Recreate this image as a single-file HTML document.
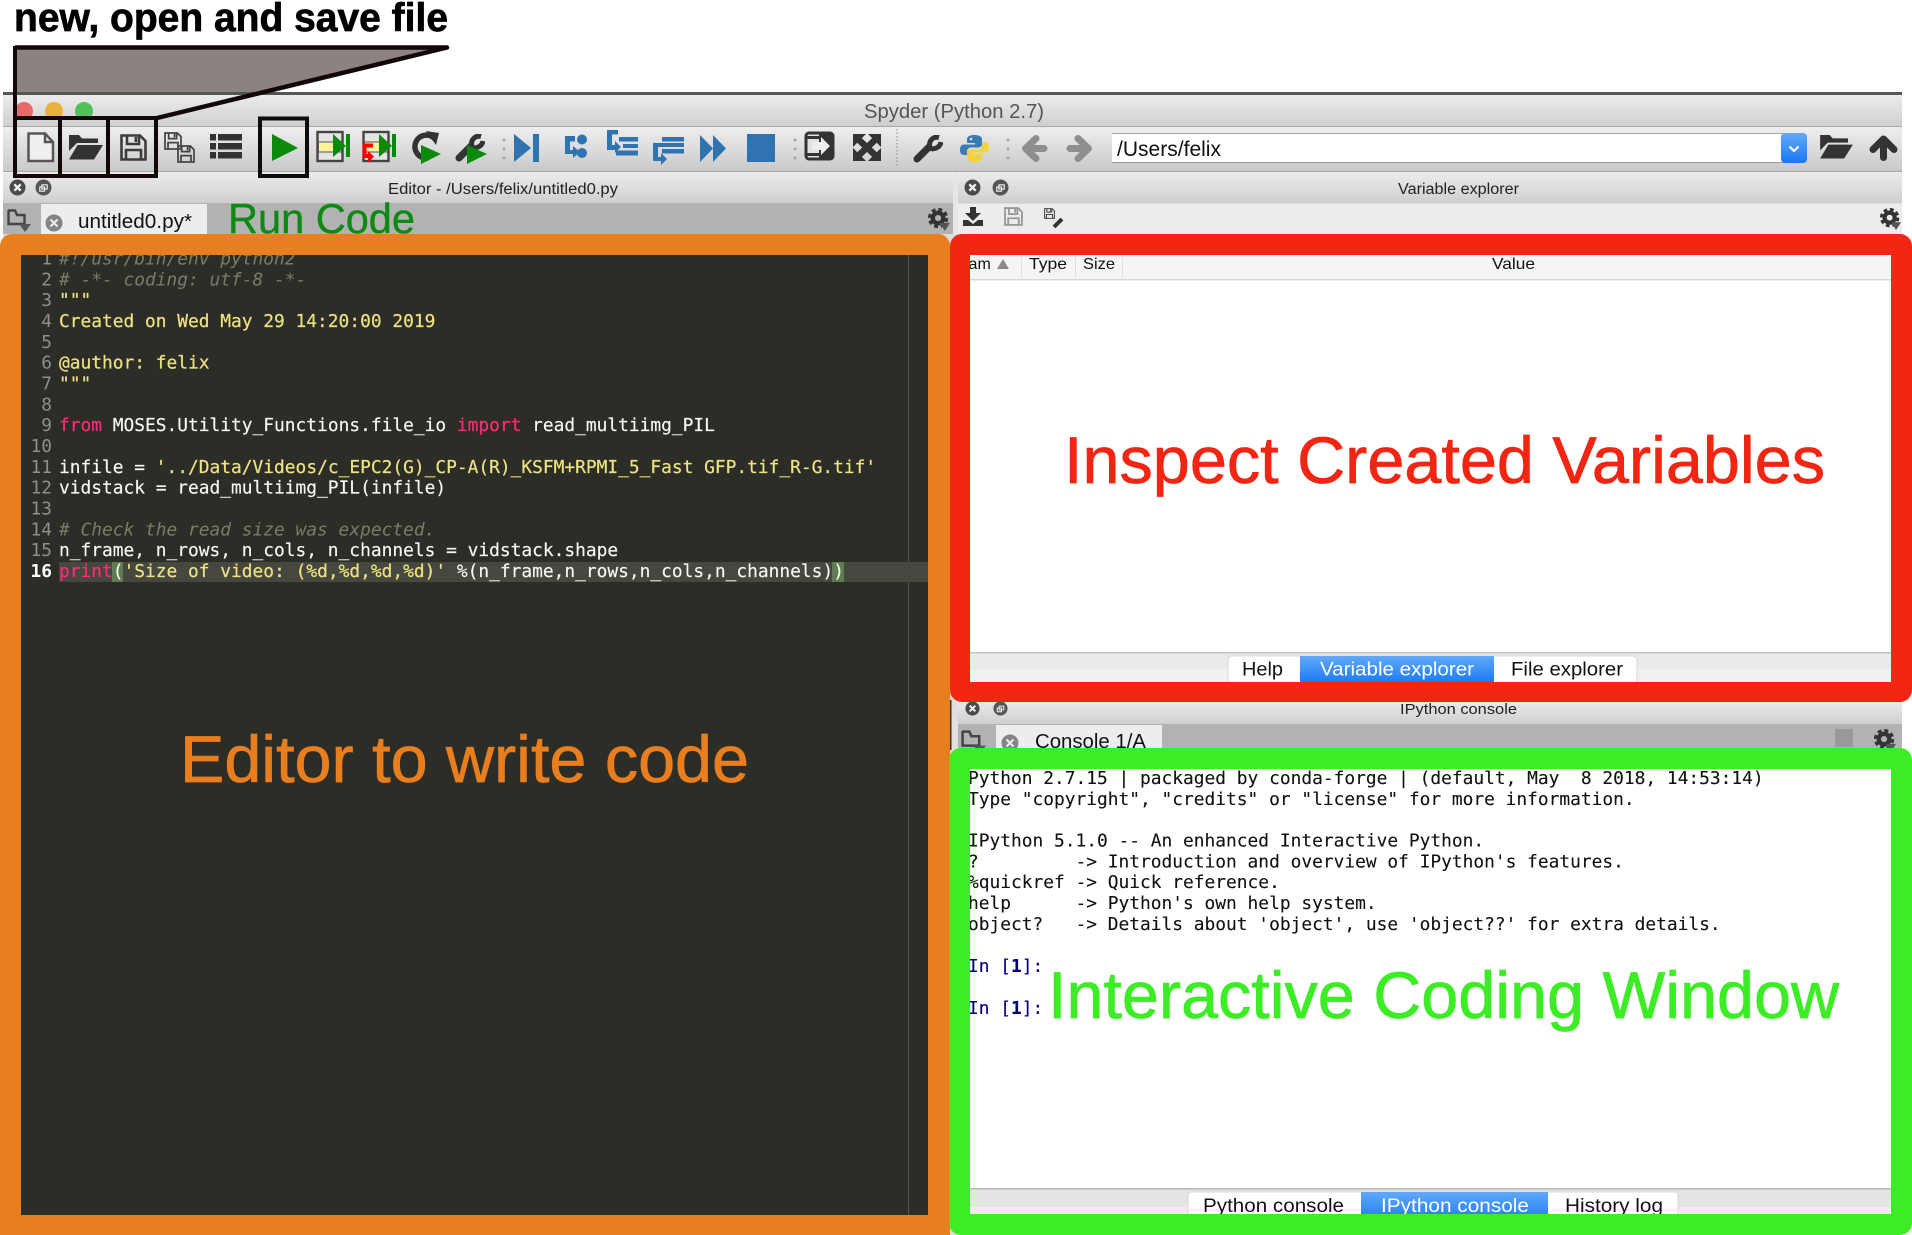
<!DOCTYPE html>
<html lang="en"><head><meta charset="utf-8"><title>Spyder</title>
<style>
html,body{margin:0;padding:0;background:#fff;width:1912px;height:1235px;overflow:hidden}
svg{display:block}
text{font-family:"Liberation Sans",sans-serif;white-space:pre}
.m text,text.m{font-family:"DejaVu Sans Mono","Liberation Mono",monospace;font-size:17.88px}
.c{fill:#7c7b68;font-style:italic}
.s{fill:#ece382;stroke:#ece382;stroke-width:.2}
.k{fill:#ff2a78;stroke:#ff2a78;stroke-width:.2}
.w{fill:#f8f8f2;stroke:#f8f8f2;stroke-width:.15}
.n{fill:#8f908b}
</style></head><body>
<svg xmlns="http://www.w3.org/2000/svg" width="1912" height="1235" viewBox="0 0 1912 1235">
<defs>
<linearGradient id="g1" x1="0" y1="0" x2="0" y2="1"><stop offset="0" stop-color="#ececec"/><stop offset="1" stop-color="#cfcfcf"/></linearGradient>
<linearGradient id="g2" x1="0" y1="0" x2="0" y2="1"><stop offset="0" stop-color="#eeeeee"/><stop offset="1" stop-color="#c9c9c9"/></linearGradient>
<linearGradient id="bl" x1="0" y1="0" x2="0" y2="1"><stop offset="0" stop-color="#62a9fb"/><stop offset="1" stop-color="#1878f4"/></linearGradient>
<symbol id="fl" viewBox="0 0 27 27"><g fill="none" stroke="currentColor" stroke-width="2.6"><path d="M1.5 1.5H20L25.5 7V25.5H1.5Z"/><path d="M7 1.5V10H19V1.5"/><path d="M6 25.5V16H21V25.5"/></g><rect x="14.5" y="3" width="2.6" height="5" fill="currentColor"/></symbol>
<symbol id="cl" viewBox="0 0 16 16"><circle cx="8" cy="8" r="7.5" fill="#4a4a4a"/><path d="M5 5L11 11M11 5L5 11" stroke="#f2f2f2" stroke-width="2.2"/></symbol>
<symbol id="dk" viewBox="0 0 16 16"><circle cx="8" cy="8" r="7.5" fill="#555"/><path d="M6.5 5.5H11.5V9.5H6.5ZM4.5 7.5H9V11.5H4.5Z" fill="none" stroke="#eee" stroke-width="1.1"/></symbol>
<symbol id="tc" viewBox="0 0 18 18"><circle cx="9" cy="9" r="8.5" fill="#858585"/><path d="M5.5 5.5L12.5 12.5M12.5 5.5L5.5 12.5" stroke="#eee" stroke-width="2"/></symbol>
<symbol id="gr" viewBox="0 0 24 24"><circle cx="10.5" cy="10.5" r="5.5" fill="none" stroke="#333" stroke-width="4.6"/><circle cx="10.5" cy="10.5" r="9" fill="none" stroke="#333" stroke-width="3.2" stroke-dasharray="4.1 2.97"/><path d="M12 15.5H23L17.5 24Z" fill="#555"/></symbol>
<symbol id="ft" viewBox="0 0 24 24"><path d="M1.5 3V16H17.5V7H10L8 2.500H2Z" fill="none" stroke="#444" stroke-width="2.400"/><path d="M12 16H24L18 24Z" fill="#555"/></symbol>
<symbol id="op" viewBox="0 0 34 26"><path d="M0 17V1H10L13 4.5H29V9H8Z" fill="#333"/><path d="M0 25.5L8.5 11H34L25 25.5Z" fill="#333"/></symbol>
<symbol id="wr" viewBox="0 0 30 28"><path d="M4 24L16 12" stroke="#333" stroke-width="7" stroke-linecap="round"/><path d="M26 2.5C20 1 15 6 17 13C20 15 27 13 28 7" fill="none" stroke="#333" stroke-width="5"/></symbol>
</defs>

<rect width="1912" height="1235" fill="#fff"/>
<polygon points="15,47 440,47 155,118 15,118" fill="#8c8381"/>

<!-- window chrome -->
<rect x="3" y="92" width="1899" height="1143" fill="#dcdcdc"/>
<rect x="3" y="92" width="1899" height="3" fill="#555"/>
<rect x="3" y="95" width="1899" height="31" fill="url(#g1)"/>
<rect x="3" y="126" width="1899" height="1" fill="#a8a8a8"/>
<rect x="3" y="127" width="1899" height="44" fill="url(#g2)"/>
<rect x="3" y="171" width="1899" height="1" fill="#a8a8a8"/>
<rect x="3" y="172" width="950" height="31" fill="url(#g1)"/>
<rect x="958" y="172" width="944" height="31" fill="url(#g1)"/>
<rect x="953" y="172" width="5" height="62" fill="#e6e6e6"/>
<rect x="3" y="203" width="950" height="31" fill="#b2b2b2"/>
<rect x="958" y="204" width="944" height="30" fill="#ececec"/>
<circle cx="24" cy="111" r="9" fill="#e8696a"/>
<circle cx="54" cy="111" r="9" fill="#e9b23f"/>
<circle cx="84" cy="111" r="9" fill="#4fc25a"/>
<text x="864" y="118" font-size="20" fill="#555" textLength="180" lengthAdjust="spacingAndGlyphs">Spyder (Python 2.7)</text>

<!-- toolbar icons -->
<path d="M28.5 133.5H45L53 142V161H28.5Z" fill="#efefef" stroke="#555" stroke-width="2.5"/><path d="M45 133.5V142H53" fill="none" stroke="#555" stroke-width="2.5"/>
<use href="#op" x="69" y="134" width="34" height="26"/>
<use href="#fl" x="120" y="134" width="27" height="27" color="#3c3c3c"/>
<use href="#fl" x="164" y="132" width="18" height="18" color="#444"/>
<use href="#fl" x="177" y="145" width="18" height="18" color="#444"/>
<g fill="#333"><rect x="210" y="134" width="6" height="6.5"/><rect x="218" y="134" width="24" height="6.5"/><rect x="210" y="143" width="6" height="6.5"/><rect x="218" y="143" width="24" height="6.5"/><rect x="210" y="152" width="6" height="6.5"/><rect x="218" y="152" width="24" height="6.5"/></g>
<polygon points="272,134 298,148 272,161" fill="#0a8a0a"/>
<!-- run cell -->
<rect x="317.5" y="132" width="25" height="29" fill="#e4e4e4" stroke="#444" stroke-width="2.4"/>
<rect x="318.5" y="142" width="23" height="10" fill="#fbf49c" stroke="#555" stroke-width="1"/>
<polygon points="333,134 346,146 333,157" fill="#0a8a0a"/><rect x="346" y="134" width="4" height="23" fill="#0a8a0a"/>
<!-- run cell advance -->
<rect x="363.5" y="132" width="25" height="29" fill="#e4e4e4" stroke="#444" stroke-width="2.4"/>
<rect x="364.5" y="142" width="23" height="10" fill="#fbf49c" stroke="#555" stroke-width="1"/>
<polygon points="379,134 392,146 379,157" fill="#0a8a0a"/><rect x="392" y="134" width="4" height="23" fill="#0a8a0a"/>
<path d="M373 145.500H364.500V156H369" fill="none" stroke="#f00" stroke-width="4"/><polygon points="368,151 374,156.500 368,163" fill="#f00"/>
<!-- rerun -->
<path d="M435 139A11.500 11.500 0 1 0 428 158" fill="none" stroke="#333" stroke-width="5.500"/><polygon points="426,131 439,133 436,145" fill="#333"/><polygon points="421,145 441,154 421,164" fill="#0a8a0a"/>
<use href="#wr" x="455" y="134" width="30" height="28"/><polygon points="467,145 487,154 467,164" fill="#0a8a0a"/>
<g fill="#a5a5a5"><circle cx="504" cy="140" r="1.500"/><circle cx="504" cy="149" r="1.500"/><circle cx="504" cy="158" r="1.500"/><circle cx="795" cy="140" r="1.500"/><circle cx="795" cy="149" r="1.500"/><circle cx="795" cy="158" r="1.500"/><circle cx="1008" cy="140" r="1.500"/><circle cx="1008" cy="149" r="1.500"/><circle cx="1008" cy="158" r="1.500"/></g>
<line x1="897" y1="129" x2="897" y2="167" stroke="#888" stroke-width="1" stroke-dasharray="1.500 2"/>
<!-- blue debug icons -->
<g fill="#2f74b0">
<polygon points="514,134 531,148 514,162"/><rect x="533" y="134" width="6" height="28"/>
<circle cx="582" cy="139.500" r="5"/><circle cx="582" cy="153" r="5"/>
<path d="M575 136V141.500H570V150H573V146L580 152L573 158V154H565V136Z"/>
<path d="M607 130H618V134.500H612V145H615V141L621 147L615 153V150H607Z"/>
<rect x="619" y="137" width="19" height="4.500"/><rect x="623" y="144" width="15" height="4"/><rect x="616" y="150.500" width="22" height="5"/>
<rect x="662" y="137" width="22" height="4.500"/><rect x="662" y="149" width="22" height="4.500"/>
<path d="M666 143H684V147H658V157H661V153L667 159L661 165V161H653V143Z"/>
<polygon points="700,135 713,148.500 700,162"/><polygon points="713,135 726,148.500 713,162"/>
<rect x="747" y="134" width="28" height="28"/>
</g>
<!-- maximize pane -->
<rect x="806" y="133" width="27" height="26" rx="3" fill="#e2e2e2" stroke="#333" stroke-width="3"/>
<rect x="819" y="134" width="13" height="24" fill="#333"/><rect x="807" y="136" width="12" height="3" fill="#333"/><rect x="807" y="153" width="12" height="3" fill="#333"/>
<polygon points="812,142 821,142 821,137 830,146 821,155 821,150 812,150" fill="#eee"/>
<!-- fullscreen -->
<g fill="#333"><path d="M858 139L876 156M876 139L858 156" stroke="#333" stroke-width="6.500"/><polygon points="853,134 866,134 853,147"/><polygon points="881,134 868,134 881,147"/><polygon points="853,161 866,161 853,148"/><polygon points="881,161 868,161 881,148"/></g>
<use href="#wr" x="913" y="135" width="30" height="28"/>
<!-- python -->
<path d="M974.500 135C968 135 967 137.500 967 140V143H975V144.500H964C961 144.500 960 147 960 149.500C960 153 961 155 964 155H967V151.500C967 149 969 147.500 971 147.500H978C980.500 147.500 982 146 982 144V139.500C982 137 980 135 974.500 135Z" fill="#3b7ab3"/><circle cx="971" cy="139" r="1.300" fill="#e6e6e6"/>
<path d="M974.500 135C968 135 967 137.500 967 140V143H975V144.500H964C961 144.500 960 147 960 149.500C960 153 961 155 964 155H967V151.500C967 149 969 147.500 971 147.500H978C980.500 147.500 982 146 982 144V139.500C982 137 980 135 974.500 135Z" fill="#f4d23e" transform="rotate(180 974.500 148.500)"/>
<!-- nav arrows -->
<g fill="none" stroke="#8e8e8e" stroke-width="7" stroke-linecap="round" stroke-linejoin="round"><path d="M1036 138.500L1025.500 148.500L1036 158.500M1026 148.500H1044"/><path d="M1078 138.500L1088.500 148.500L1078 158.500M1088 148.500H1070"/></g>
<!-- path combo -->
<rect x="1112" y="133" width="672" height="30" fill="#fff"/><rect x="1112" y="133" width="672" height="1" fill="#a5a5a5"/><rect x="1112" y="162" width="672" height="1" fill="#9a9a9a"/>
<text x="1117" y="156" font-size="21" fill="#111" textLength="104" lengthAdjust="spacingAndGlyphs">/Users/felix</text>
<rect x="1781" y="133" width="26" height="30" rx="4" fill="url(#bl)"/><path d="M1789.500 146.500L1794 151L1798.500 146.500" fill="none" stroke="#fff" stroke-width="2.200"/>
<use href="#op" x="1820" y="134" width="33" height="25"/>
<g fill="none" stroke="#333" stroke-width="7" stroke-linecap="round" stroke-linejoin="round"><path d="M1873 149.500L1883.500 139L1894 149.500M1883.500 140V157.500"/></g>

<!-- dock headers -->
<use href="#cl" x="9" y="179" width="17" height="17"/><use href="#dk" x="35" y="179" width="17" height="17"/>
<text x="388" y="194" font-size="15.500" fill="#222" textLength="230" lengthAdjust="spacingAndGlyphs">Editor - /Users/felix/untitled0.py</text>
<use href="#cl" x="964" y="179" width="17" height="17"/><use href="#dk" x="992" y="179" width="17" height="17"/>
<text x="1398" y="194" font-size="15.500" fill="#222" textLength="121" lengthAdjust="spacingAndGlyphs">Variable explorer</text>
<use href="#ft" x="7" y="208" width="24" height="24"/>
<rect x="41" y="204" width="166" height="30" fill="#ededed"/>
<use href="#tc" x="45" y="214" width="18" height="18"/>
<text x="78" y="228" font-size="20" fill="#111" textLength="114" lengthAdjust="spacingAndGlyphs">untitled0.py*</text>
<text x="228" y="233" font-size="41.500" fill="#0c8a12" stroke="#0c8a12" stroke-width=".4" textLength="187" lengthAdjust="spacingAndGlyphs">Run Code</text>
<use href="#gr" x="928" y="208" width="23" height="23"/>
<!-- variable explorer toolbar -->
<g fill="#333"><path d="M970 207H976V213H981L973 221L965 213H970Z"/><path d="M963 220H968L973 224L978 220H983V226H963Z"/></g>
<use href="#fl" x="1004" y="207" width="19" height="19" color="#999"/>
<use href="#fl" x="1044" y="208" width="11" height="11" color="#444"/>
<path d="M1054 227L1062 219" stroke="#333" stroke-width="4"/>
<use href="#gr" x="1880" y="208" width="22" height="22"/>

<!-- variable explorer -->
<rect x="960" y="255" width="935" height="430" fill="#fff"/>
<rect x="960" y="255" width="935" height="24" fill="#f5f5f5"/><rect x="960" y="279" width="935" height="1.500" fill="#d8d8d8"/>
<rect x="1021" y="257" width="1" height="21" fill="#dedede"/><rect x="1075" y="257" width="1" height="21" fill="#dedede"/><rect x="1122" y="257" width="1" height="21" fill="#dedede"/>
<text x="957" y="269" font-size="16" fill="#111">Nam</text><polygon points="997,269 1009,269 1003,259" fill="#8a8a8a"/>
<text x="1029" y="269" font-size="16" fill="#111" textLength="38" lengthAdjust="spacingAndGlyphs">Type</text>
<text x="1083" y="269" font-size="16" fill="#111" textLength="32" lengthAdjust="spacingAndGlyphs">Size</text>
<text x="1492" y="269" font-size="16" fill="#111" textLength="43" lengthAdjust="spacingAndGlyphs">Value</text>
<rect x="960" y="653" width="935" height="32" fill="#eaeaea"/><rect x="960" y="652" width="935" height="1.500" fill="#c4c4c4"/><rect x="960" y="670" width="935" height="15" fill="#f1f1f1"/>
<rect x="1228" y="656" width="409" height="28" rx="4" fill="#fff" stroke="#d8d8d8"/>
<rect x="1300" y="656" width="194" height="28" fill="url(#bl)"/>
<text x="1242" y="675.500" font-size="19" fill="#111" textLength="41" lengthAdjust="spacingAndGlyphs">Help</text>
<text x="1320" y="675.500" font-size="19" fill="#fff" textLength="154" lengthAdjust="spacingAndGlyphs">Variable explorer</text>
<text x="1511" y="675.500" font-size="19" fill="#111" textLength="112" lengthAdjust="spacingAndGlyphs">File explorer</text>
<text x="1064" y="483" font-size="66" fill="#f02512" stroke="#f02512" stroke-width=".7" textLength="761" lengthAdjust="spacingAndGlyphs">Inspect Created Variables</text>

<!-- ipython console chrome -->
<rect x="950" y="700" width="8" height="50" fill="#e0e0e0"/><rect x="950" y="700" width="1.500" height="50" fill="#333"/>
<rect x="958" y="700" width="944" height="24" fill="url(#g1)"/>
<rect x="958" y="724" width="944" height="26" fill="#b2b2b2"/>
<use href="#cl" x="965" y="701" width="15" height="15"/><use href="#dk" x="993" y="701" width="15" height="15"/>
<text x="1400" y="714" font-size="15" fill="#222" textLength="117" lengthAdjust="spacingAndGlyphs">IPython console</text>
<use href="#ft" x="961" y="729" width="25" height="25"/>
<rect x="996" y="725" width="166" height="25" fill="#ededed"/>
<use href="#tc" x="1001" y="734" width="18" height="18"/>
<text x="1035" y="748" font-size="20" fill="#111" textLength="111" lengthAdjust="spacingAndGlyphs">Console 1/A</text>
<rect x="1835" y="729" width="18" height="18" fill="#999"/>
<use href="#gr" x="1874" y="729" width="23" height="23"/>

<!-- console -->
<rect x="960" y="760" width="935" height="430" fill="#fff"/>
<g class="m" fill="#111" stroke="#111" stroke-width=".12">
<text x="968" y="784">Python 2.7.15 | packaged by conda-forge | (default, May  8 2018, 14:53:14)</text>
<text x="968" y="805">Type "copyright", "credits" or "license" for more information.</text>
<text x="968" y="846.500">IPython 5.1.0 -- An enhanced Interactive Python.</text>
<text x="968" y="867.300">?         -&gt; Introduction and overview of IPython's features.</text>
<text x="968" y="888.200">%quickref -&gt; Quick reference.</text>
<text x="968" y="909">help      -&gt; Python's own help system.</text>
<text x="968" y="929.800">object?   -&gt; Details about 'object', use 'object??' for extra details.</text>
<text x="968" y="972" fill="#000080" stroke="#000080">In [<tspan font-weight="bold">1</tspan>]:</text>
<text x="968" y="1014" fill="#000080" stroke="#000080">In [<tspan font-weight="bold">1</tspan>]:</text>
</g>
<rect x="960" y="1188" width="935" height="30" fill="#e4e4e4"/><rect x="960" y="1188" width="935" height="1.500" fill="#b8b8b8"/><rect x="960" y="1207" width="935" height="10" fill="#eeeeee"/>
<rect x="1188" y="1192" width="490" height="30" rx="4" fill="#fff" stroke="#d8d8d8"/>
<rect x="1361" y="1192" width="187" height="30" fill="url(#bl)"/>
<text x="1203" y="1212" font-size="19.500" fill="#111" textLength="141" lengthAdjust="spacingAndGlyphs">Python console</text>
<text x="1381" y="1212" font-size="19.500" fill="#fff" textLength="148" lengthAdjust="spacingAndGlyphs">IPython console</text>
<text x="1565" y="1212" font-size="19.500" fill="#111" textLength="98" lengthAdjust="spacingAndGlyphs">History log</text>
<text x="1048" y="1018" font-size="66" fill="#3cec24" stroke="#3cec24" stroke-width=".7" textLength="791" lengthAdjust="spacingAndGlyphs">Interactive Coding Window</text>

<!-- editor -->
<rect x="10" y="245" width="930" height="980" fill="#2c2d26"/>
<rect x="908" y="255" width="1" height="960" fill="#55564f"/>
<rect x="59" y="562" width="869" height="20" fill="#46473f"/>
<rect x="112" y="562" width="11" height="20" fill="#5f7c55"/>
<rect x="832" y="562" width="12" height="20" fill="#5f7c55"/>
<g class="m">
<g class="n" text-anchor="end">
<text x="52" y="264.500">1</text><text x="52" y="285.300">2</text><text x="52" y="306.200">3</text><text x="52" y="327">4</text><text x="52" y="347.800">5</text><text x="52" y="368.700">6</text><text x="52" y="389.500">7</text><text x="52" y="410.300">8</text><text x="52" y="431.200">9</text><text x="52" y="452">10</text><text x="52" y="472.800">11</text><text x="52" y="493.700">12</text><text x="52" y="514.500">13</text><text x="52" y="535.300">14</text><text x="52" y="556.200">15</text>
<text x="52" y="577" style="fill:#fff;font-weight:bold">16</text>
</g>
<text x="59" y="264.500" class="c">#!/usr/bin/env python2</text>
<text x="59" y="285.300" class="c"># -*- coding: utf-8 -*-</text>
<text x="59" y="306.200" class="s">"""</text>
<text x="59" y="327" class="s">Created on Wed May 29 14:20:00 2019</text>
<text x="59" y="368.700" class="s">@author: felix</text>
<text x="59" y="389.500" class="s">"""</text>
<text x="59" y="431.200" class="w"><tspan class="k">from</tspan> MOSES.Utility_Functions.file_io <tspan class="k">import</tspan> read_multiimg_PIL</text>
<text x="59" y="472.800" class="w">infile = <tspan class="s">'../Data/Videos/c_EPC2(G)_CP-A(R)_KSFM+RPMI_5_Fast GFP.tif_R-G.tif'</tspan></text>
<text x="59" y="493.700" class="w">vidstack = read_multiimg_PIL(infile)</text>
<text x="59" y="535.300" class="c"># Check the read size was expected.</text>
<text x="59" y="556.200" class="w">n_frame, n_rows, n_cols, n_channels = vidstack.shape</text>
<text x="59" y="577" class="w"><tspan class="k">print</tspan>(<tspan class="s">'Size of video: (%d,%d,%d,%d)'</tspan> %(n_frame,n_rows,n_cols,n_channels))</text>
</g>
<text x="180" y="782" font-size="66" fill="#e97e1f" stroke="#e97e1f" stroke-width=".7" textLength="569" lengthAdjust="spacingAndGlyphs">Editor to write code</text>

<!-- coloured frames -->
<path fill-rule="evenodd" fill="#e97e1f" d="M12 234H938A12 12 0 0 1 950 246V1235H0V246A12 12 0 0 1 12 234ZM21 255V1215H928V255Z"/>
<path fill-rule="evenodd" fill="#3cec24" d="M961 748H1900A12 12 0 0 1 1912 760V1223A12 12 0 0 1 1900 1235H961A12 12 0 0 1 949 1223V760A12 12 0 0 1 961 748ZM970 769V1214H1891V769Z"/>
<path fill-rule="evenodd" fill="#f22612" d="M962 234H1900A12 12 0 0 1 1912 246V690A12 12 0 0 1 1900 702H962A12 12 0 0 1 950 690V246A12 12 0 0 1 962 234ZM970 255V682H1891V255Z"/>

<!-- callout strokes -->
<path d="M15 47.500H447L155 118.500" fill="none" stroke="#120808" stroke-width="4.500" stroke-linejoin="round"/>
<path d="M15 46V176H156V118M60 118V176M108 118V176M15 118H156" fill="none" stroke="#120808" stroke-width="4"/>
<rect x="260" y="118.500" width="47" height="57.500" fill="none" stroke="#0c0c0c" stroke-width="4"/>
<text x="14" y="31" font-size="40" font-weight="bold" fill="#000" stroke="#000" stroke-width="0.700" textLength="434" lengthAdjust="spacingAndGlyphs">new, open and save file</text>
</svg>
</body></html>
